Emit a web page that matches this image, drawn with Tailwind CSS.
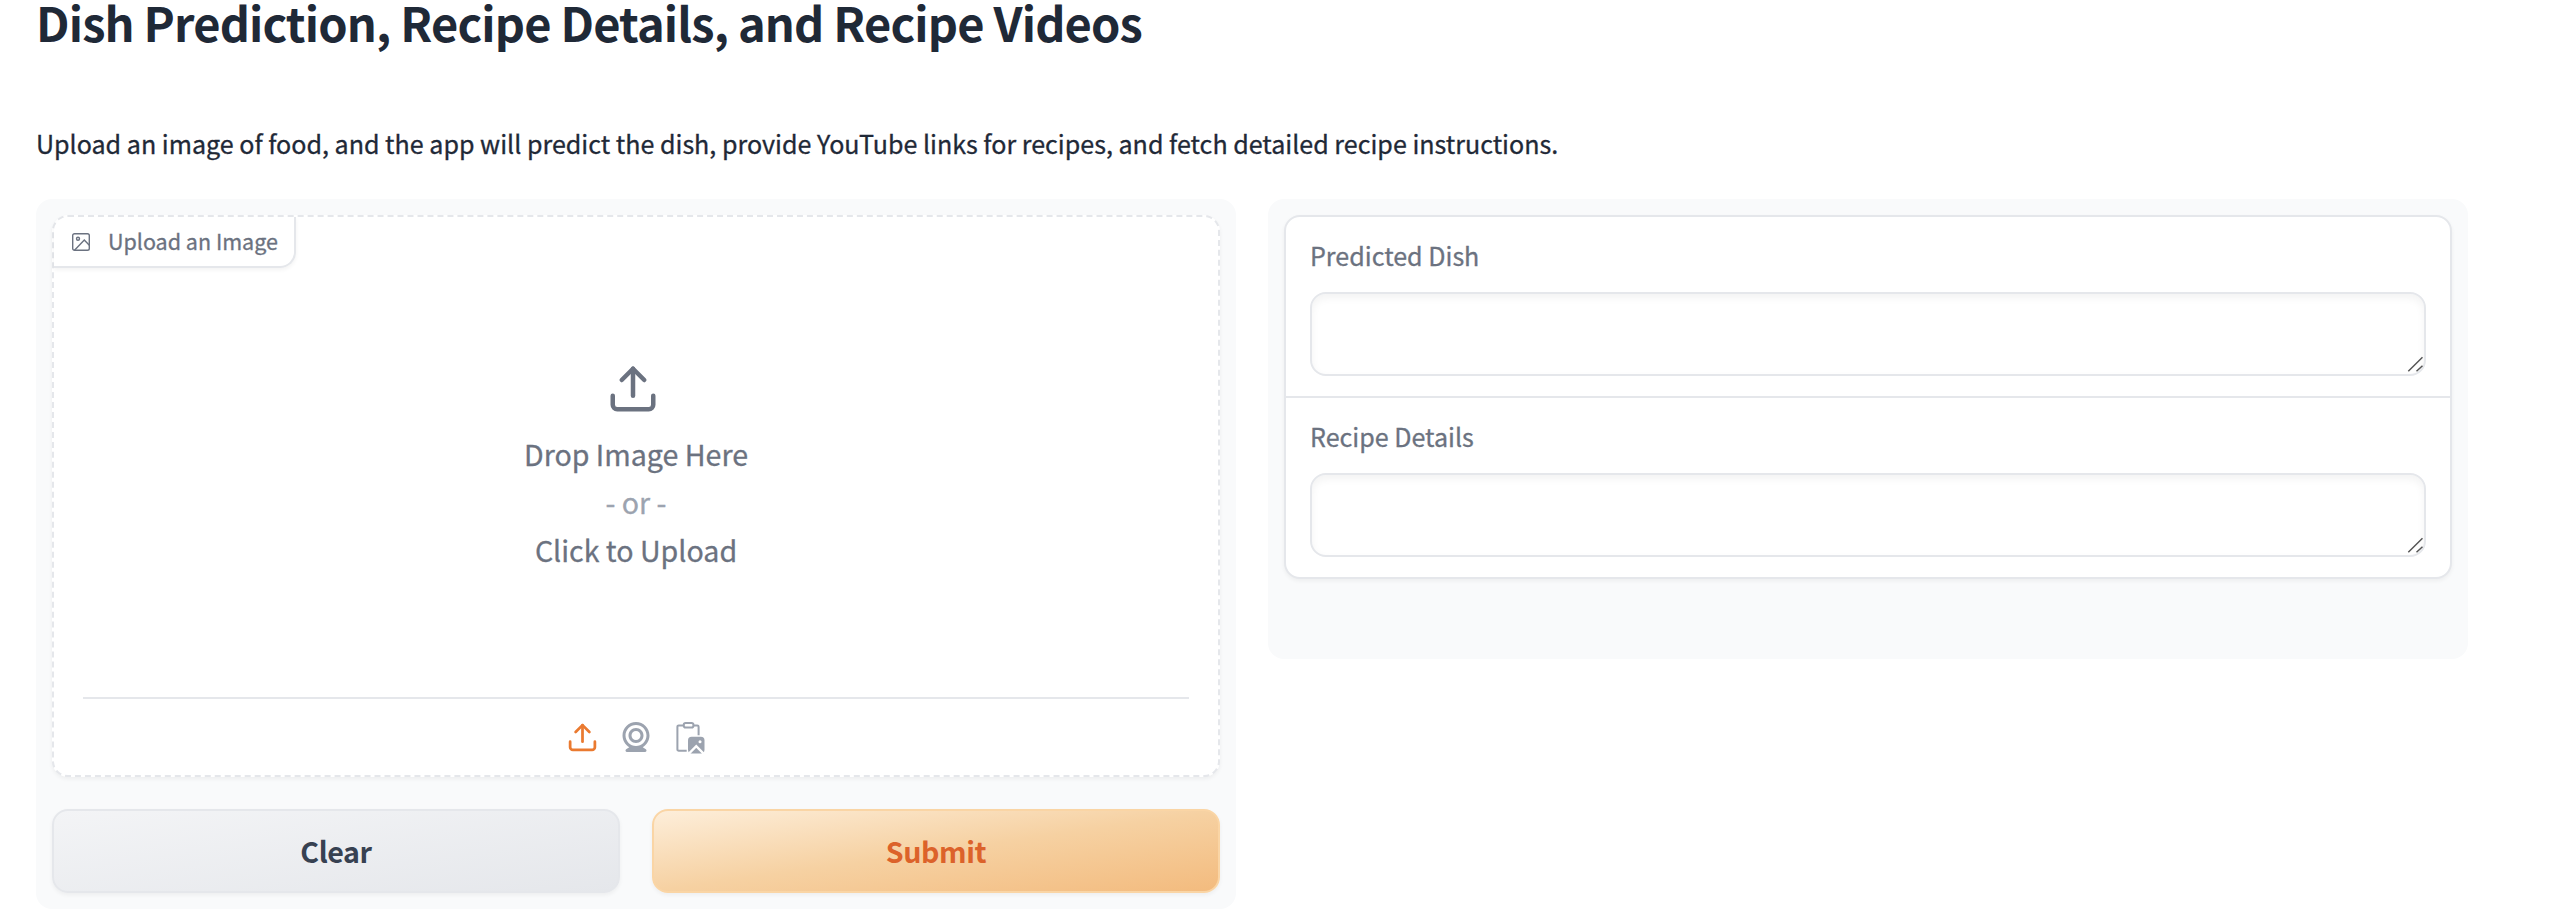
<!DOCTYPE html>
<html lang="en">
<head>
<meta charset="utf-8">
<title>Dish Prediction</title>
<script src="https://cdn.jsdelivr.net/npm/@tailwindcss/browser@4"></script>
</head>
<body class="bg-white w-[2564px] h-[916px] overflow-hidden font-['Noto_Sans_CJK_SC',sans-serif] text-[#1f2937]">
<main class="pl-9">
  <h1 class="h-[124px] leading-[43px] text-[47px] tracking-[-0.85px] font-bold whitespace-nowrap"><span>Dish Prediction, Recipe Details, and Recipe Videos</span></h1>
  <p class="h-[75px] leading-[39px] text-[25.07px] [-webkit-text-stroke:0.3px] whitespace-nowrap"><span>Upload an image of food, and the app will predict the dish, provide YouTube links for recipes, and fetch detailed recipe instructions.</span></p>
  <div class="flex items-start gap-8">
    <section class="w-[1200px] h-[710px] rounded-[16px] bg-[#f9fafb] p-4">
      <div class="relative h-[562px] rounded-[16px] border-2 border-dashed border-[#e5e7eb] bg-white shadow-[0_2px_4px_rgba(0,0,0,0.05)] flex flex-col">
        <div class="absolute left-0 top-0 w-[242px] h-[51px] flex items-center pl-[18px] border-r-2 border-b-2 border-solid border-[#e5e7eb] rounded-br-[16px] rounded-tl-[14px] text-[#6b7280] shadow-[0_2px_4px_rgba(0,0,0,0.05)]">
          <svg class="w-[18px] h-[18px]" viewBox="0 0 18 18" fill="none" stroke="currentColor" stroke-width="1.4"><rect x="0.7" y="0.7" width="16.6" height="16.6" rx="1.8"/><circle cx="6" cy="5.7" r="1.5"/><path d="M17.3 12.300 12.3 7 2.500 17.3"/></svg>
          <span class="ml-[18px] mb-[2px] text-[21.5px] leading-none [-webkit-text-stroke:0.3px] whitespace-nowrap">Upload an Image</span>
        </div>
        <div class="h-[480px] flex flex-col items-center pt-[145px] text-[28.6px] leading-[48px] [-webkit-text-stroke:0.3px] text-[#6b7280]">
          <svg class="w-[54px] h-[54px] mr-[6px] mb-[14px]" viewBox="0 0 24 24" fill="none" stroke="currentColor" stroke-width="2" stroke-linecap="round" stroke-linejoin="round"><path d="M21 15v4a2 2 0 0 1-2 2H5a2 2 0 0 1-2-2v-4"/><path d="M17 8 12 3 7 8"/><path d="M12 3v12"/></svg>
          <span>Drop Image Here</span><span class="text-[#9ca3af]">- or -</span><span>Click to Upload</span>
        </div>
        <div class="mx-[29px] border-t-2 border-[#e5e7eb] h-[78px] flex justify-center pt-[20px] pl-[2px] text-[#9ca3af]">
          <svg class="w-[33px] h-[33px] mt-[2px] mr-[19px] text-[#ea7a30]" viewBox="0 0 24 24" fill="none" stroke="currentColor" stroke-width="2" stroke-linecap="round" stroke-linejoin="round"><path d="M21 15v4a2 2 0 0 1-2 2H5a2 2 0 0 1-2-2v-4"/><path d="M17 8 12 3 7 8"/><path d="M12 3v12"/></svg>
          <svg class="w-9 h-9 mr-[18px]" viewBox="0 0 24 24" fill="currentColor"><path d="M12 2c-4.963 0-9 4.038-9 9 0 3.328 1.82 6.232 4.513 7.79l-2.067 1.378A1 1 0 0 0 6 22h12a1 1 0 0 0 .555-1.832l-2.067-1.378C19.18 17.232 21 14.328 21 11c0-4.962-4.037-9-9-9zm0 16c-3.859 0-7-3.141-7-7 0-3.86 3.141-7 7-7s7 3.14 7 7c0 3.859-3.141 7-7 7z"/><path d="M12 6c-2.757 0-5 2.243-5 5s2.243 5 5 5 5-2.243 5-5-2.243-5-5-5zm0 8c-1.654 0-3-1.346-3-3s1.346-3 3-3 3 1.346 3 3-1.346 3-3 3z"/></svg>
          <svg class="w-9 h-9" viewBox="0 0 36 36" fill="none" stroke="currentColor" stroke-width="2"><path d="M11.500 6.400H6.700a1.300 1.300 0 0 0-1.300 1.300V30.400A1.300 1.300 0 0 0 6.700 31.700H14.700M21.500 6.400h3.800a1.300 1.300 0 0 1 1.300 1.300V16.300"/><rect x="11.800" y="4" width="9.600" height="4.500" rx="1.800"/><rect x="16" y="17.800" width="16.500" height="16.600" rx="3.600" fill="currentColor" stroke="none"/><circle cx="28" cy="22.700" r="1.500" fill="#fff" stroke="none"/><path d="M15.500 36 24.250 27.200 33 36" stroke="#fff" stroke-width="2.400"/></svg>
        </div>
      </div>
      <div class="mt-8 flex gap-8 text-[28.6px] tracking-[-0.4px] font-bold">
        <button class="flex-1 h-[84px] rounded-[16px] border-2 border-[#e5e7eb] bg-[linear-gradient(to_bottom_right,#f3f4f6,#e5e7eb)] text-[#374151] shadow-[0_2px_4px_rgba(0,0,0,0.05)]"><span>Clear</span></button>
        <button class="flex-1 h-[84px] rounded-[16px] border-2 border-[#fad5a5] bg-[linear-gradient(to_bottom_right,#fdeeda,#f6d1a2_50%,#f3bb7e)] text-[#dc622a] shadow-[0_2px_4px_rgba(0,0,0,0.05)]"><span>Submit</span></button>
      </div>
    </section>
    <section class="w-[1200px] h-[460px] rounded-[16px] bg-[#f9fafb] p-4">
      <div class="h-[364px] rounded-[16px] border-2 border-[#e5e7eb] bg-white shadow-[0_2px_4px_rgba(0,0,0,0.05)] text-[25.07px] [-webkit-text-stroke:0.3px] text-[#6b7280]">
        <div class="h-[181px] px-6 pt-[20px] border-b-2 border-[#e5e7eb]">
          <div class="h-[55px] leading-[37px]"><span>Predicted Dish</span></div>
          <div class="h-[84px] rounded-[16px] border-2 border-[#e5e7eb] shadow-[inset_0_4px_8px_rgba(0,0,0,0.05)] flex items-end justify-end pr-[1px] pb-[2px]"><svg class="w-4 h-4" viewBox="0 0 16 16" fill="none" stroke="#555" stroke-width="1.500"><path d="M1.300 15.200 15.500 1.300M9.500 15.200l6-5.500"/></svg></div>
        </div>
        <div class="h-[179px] px-6 pt-[20px]">
          <div class="h-[55px] leading-[37px]"><span>Recipe Details</span></div>
          <div class="h-[84px] rounded-[16px] border-2 border-[#e5e7eb] shadow-[inset_0_4px_8px_rgba(0,0,0,0.05)] flex items-end justify-end pr-[1px] pb-[2px]"><svg class="w-4 h-4" viewBox="0 0 16 16" fill="none" stroke="#555" stroke-width="1.500"><path d="M1.300 15.200 15.500 1.300M9.500 15.200l6-5.500"/></svg></div>
        </div>
      </div>
    </section>
  </div>
</main>
</body>
</html>
